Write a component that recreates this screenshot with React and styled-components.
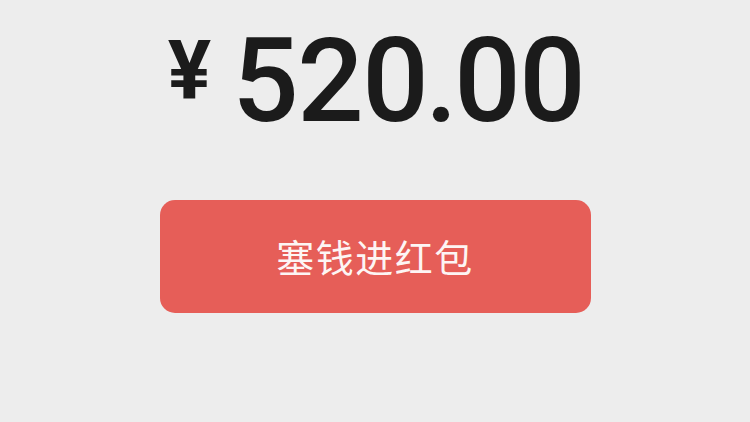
import React from "react";
import styled, { createGlobalStyle } from "styled-components";

const Global = createGlobalStyle`
  html, body { margin: 0; padding: 0; background: #ededed; }
  body { font-family: Roboto, "Noto Sans CJK SC", sans-serif; }
`;

const Page = styled.div`
  width: 750px;
  height: 422px;
  background: #ededed;
  display: flex;
  flex-direction: column;
  align-items: center;
  padding-top: 23px;
  box-sizing: border-box;
`;

const AmountRow = styled.div`
  display: flex;
  align-items: flex-start;
  color: #1b1b1b;
  padding-left: 2px;
`;

const Currency = styled.span`
  font-family: Roboto, sans-serif;
  font-weight: 700;
  font-size: 81px;
  line-height: 1;
  margin-top: 7px;
  margin-right: 21px;
`;

const Digits = styled.span`
  font-family: Roboto, sans-serif;
  font-weight: 500;
  font-size: 117px;
  line-height: 117px;
  letter-spacing: -1.5px;
`;

const Dot = styled.span`
  margin: 0 -2px;
`;

const Button = styled.button`
  margin-top: 60px;
  width: 431px;
  height: 113px;
  border: none;
  border-radius: 15px;
  background: #e65e58;
  color: #fdf5f4;
  font-family: "Noto Sans CJK SC", sans-serif;
  font-weight: 400;
  font-size: 38px;
  letter-spacing: 1.5px;
  display: flex;
  align-items: center;
  justify-content: center;
  padding: 0 0 2px;
  cursor: pointer;
`;

export default function App() {
  return (
    <>
      <Global />
      <Page>
        <AmountRow>
          <Currency>¥</Currency>
          <Digits>
            520<Dot>.</Dot>00
          </Digits>
        </AmountRow>
        <Button>塞钱进红包</Button>
      </Page>
    </>
  );
}
